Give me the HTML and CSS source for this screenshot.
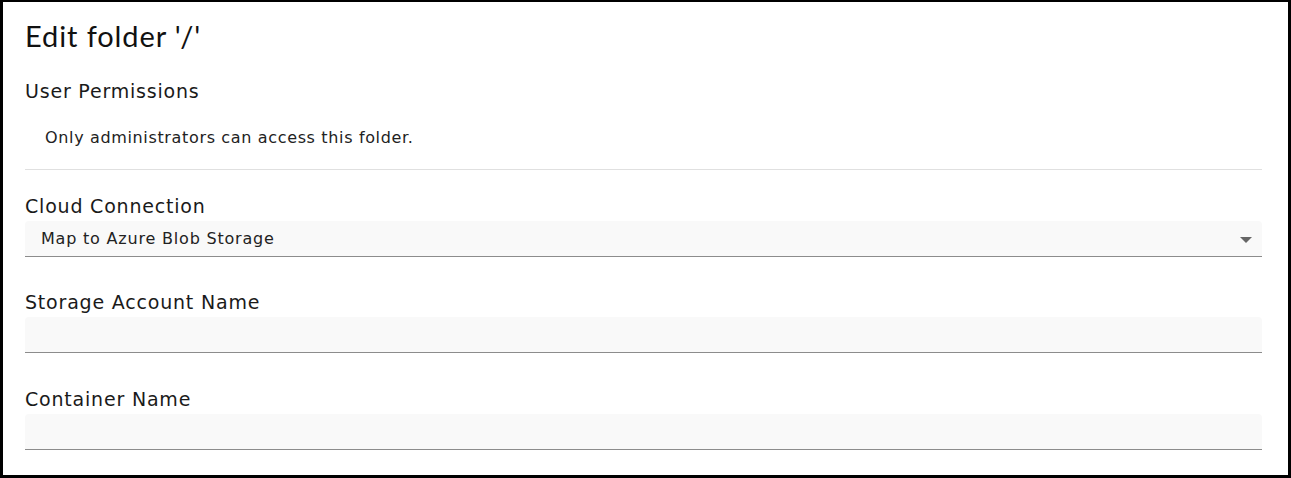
FILE: index.html
```html
<!DOCTYPE html>
<html>
<head>
<meta charset="utf-8">
<link rel="stylesheet" href="styles.css">
</head>
<body>
<div class="frame">
  <h1 class="title">Edit folder '/'</h1>
  <section class="perm">
    <h2 class="label">User Permissions</h2>
    <p class="note">Only administrators can access this folder.</p>
  </section>
  <hr class="sep">
  <div class="field">
    <label class="label">Cloud Connection</label>
    <div class="select">
      <span class="select-text">Map to Azure Blob Storage</span>
      <svg class="caret" width="12" height="6" viewBox="0 0 12 6"><path d="M0 0 L12 0 L6 6 Z" fill="#666"/></svg>
    </div>
  </div>
  <div class="field">
    <label class="label">Storage Account Name</label>
    <div class="input"></div>
  </div>
  <div class="field">
    <label class="label">Container Name</label>
    <div class="input"></div>
  </div>
</div>
</body>
</html>
```
FILE: styles.css
```css
html, body { margin: 0; padding: 0; background: #fff; }
.frame {
  box-sizing: border-box;
  width: 1291px;
  height: 478px;
  border: 3px solid #000;
  border-top-width: 2px;
  padding: 0 26px 0 22px;
  font-family: "DejaVu Sans", sans-serif;
  color: #1a1a1a;
  overflow: hidden;
}
.title {
  margin: 0;
  padding-top: 17px;
  height: 33px;
  font-family: "Lato", sans-serif;
  font-weight: 400;
  font-size: 29px;
  letter-spacing: 0.9px;
  line-height: 33px;
  color: #111;
}
.label {
  display: block;
  margin: 0;
  font-size: 19px;
  letter-spacing: 0.8px;
  font-weight: 400;
  line-height: 24px;
  color: #1a1a1a;
}
.field .label { margin-bottom: 3px; }
.perm { padding-top: 27px; }
.note {
  margin: 0;
  padding: 25px 0 0 20px;
  font-size: 16px;
  letter-spacing: 0.65px;
  line-height: 20px;
  color: #222;
}
.sep {
  margin: 21px 0 0;
  border: 0;
  border-top: 1px solid #e0e0e0;
  height: 0;
}
.field { padding-top: 24px; }
.field + .field { padding-top: 33px; }
.field:last-child { padding-top: 34px; }
.select, .input {
  box-sizing: border-box;
  height: 36px;
  background: #f9f9f9;
  border-bottom: 1px solid #8c8c8c;
  border-radius: 4px 4px 0 0;
}
.select {
  display: flex;
  align-items: center;
  justify-content: space-between;
  padding: 0 10px 0 16px;
}
.select-text { font-size: 16px; letter-spacing: 0.8px; color: #222; }
.caret { margin-top: 2px; }
```
